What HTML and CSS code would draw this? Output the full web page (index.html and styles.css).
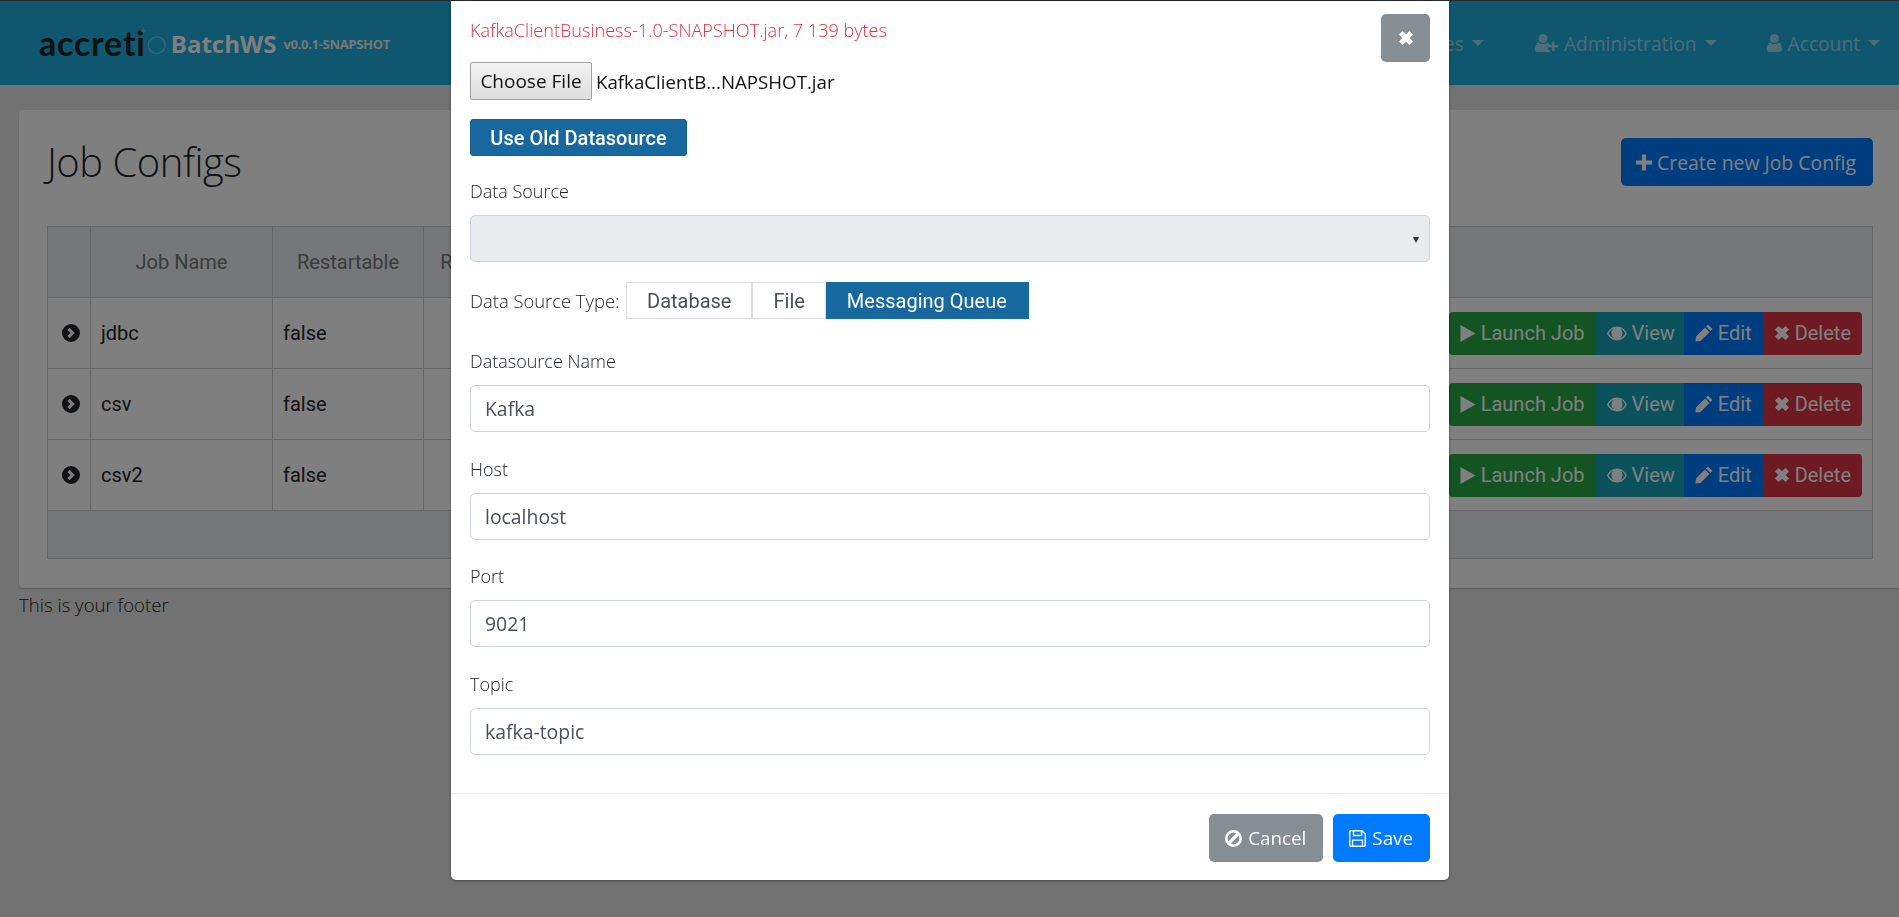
FILE: index.html
```html
<!DOCTYPE html>
<html lang="en">
<head>
    <meta charset="UTF-8">
    <meta name="viewport" content="width=device-width, initial-scale=1.0">
    <title>BatchWS</title>
    <link rel="stylesheet" href="styles.css">
</head>
<body>
    <svg class="icon-defs" width="0" height="0">
        <symbol id="i-play" viewBox="0 0 16 18"><path d="M0 0L16 9L0 18z"/></symbol>
        <symbol id="i-eye" viewBox="0 0 20 14"><path fill-rule="evenodd" d="M10 0C5.500 0 2 2.800 0 7c2 4.200 5.500 7 10 7s8-2.800 10-7C18 2.800 14.500 0 10 0zM1.700 7C2.900 4.700 4.400 3 6.300 2.100A5.500 5.500 0 0 0 4.500 7a5.500 5.500 0 0 0 11 0c0-1.900-.7-3.600-1.800-4.900C15.600 3 17.100 4.700 18.300 7c-1.800 3.300-4.700 5.500-8.300 5.500S3.500 10.300 1.700 7z"/></symbol>
        <symbol id="i-pencil" viewBox="0 0 18 18"><path d="M13 0.500L17.500 5L15.500 7L11 2.500zM10 3.500L14.500 8L5.500 17L0.500 17.500L1 12.500z"/></symbol>
        <symbol id="i-times" viewBox="0 0 14 14"><path d="M4 .8L7 3.800L10 .8L13.200 4L10.200 7L13.200 10L10 13.200L7 10.200L4 13.200L.8 10L3.800 7L.8 4z"/></symbol>
        <symbol id="i-plus" viewBox="0 0 16 16"><path d="M6 0h4v6h6v4h-6v6H6v-6H0V6h6z"/></symbol>
        <symbol id="i-user" viewBox="0 0 15 18"><circle cx="7.500" cy="4.500" r="4.500"/><path d="M0 16c0-5 1.500-7.500 3.500-7.500C4.800 9.500 6 10 7.500 10s2.700-.5 4-1.500c2 0 3.500 2.500 3.500 7.500 0 1.300-1 2-2.200 2H2.200C1 18 0 17.300 0 16z"/></symbol>
        <symbol id="i-user-plus" viewBox="0 0 24 18"><circle cx="9" cy="4.500" r="4.500"/><path d="M1 16c0-5 1.700-7.500 3.800-7.500C6 9.500 7.400 10 9 10s3-.5 4.200-1.500c1 0 1.900.6 2.500 1.700V12h-2v4h2v2H3.200C2 18 1 17.300 1 16z"/><path d="M18 7.500h2.500V11H24v2.500h-3.500V17H18v-3.500h-3.500V11H18z"/></symbol>
        <symbol id="i-ban" viewBox="0 0 18 18"><path fill-rule="evenodd" d="M9 0a9 9 0 1 0 0 18A9 9 0 0 0 9 0zM3.700 11.900A6 6 0 0 1 11.900 3.700zM6.100 14.300L14.300 6.100A6 6 0 0 1 6.100 14.300z"/></symbol>
        <symbol id="i-save" viewBox="0 0 18 18"><path fill-rule="evenodd" d="M2 0h12l4 4v12a2 2 0 0 1-2 2H2a2 2 0 0 1-2-2V2a2 2 0 0 1 2-2zM2 1.500a.5.500 0 0 0-.5.500v14a.5.500 0 0 0 .5.500h1V10h12v6.500h1a.5.500 0 0 0 .5-.5V4.600L14 2v4.500H4v-5zM5.500 1.500v3.500h7V1.500zM4.500 11.500v5h9v-5z"/></symbol>
        <symbol id="i-chevron" viewBox="0 0 18 18"><path fill-rule="evenodd" d="M9 0a9 9 0 1 0 0 18A9 9 0 0 0 9 0zM7.500 3.800L12.700 9L7.500 14.200L5.400 12.100L8.500 9L5.400 5.900z"/></symbol>
    </svg>

    <header class="navbar">
        <a class="brand" href="#">
            <span class="logo-word">accreti</span>
            <svg class="logo-ring" viewBox="0 0 24 30">
                <circle cx="11" cy="19" r="10.500"/>
                <path class="logo-star" d="M-6 -3.500L-4.800 -.5L-2 .7L-4.800 1.900L-6 5L-7.200 1.900L-10 .7L-7.200 -.5z"/>
            </svg>
            <span class="brand-name">BatchWS</span>
            <span class="brand-version">v0.0.1-SNAPSHOT</span>
        </a>
        <nav class="nav-links">
            <a class="nav-link" href="#">Job Instances<span class="caret"></span></a>
            <a class="nav-link" href="#"><svg class="nav-icon wide"><use href="#i-user-plus"/></svg>Administration<span class="caret"></span></a>
            <a class="nav-link" href="#"><svg class="nav-icon"><use href="#i-user"/></svg>Account<span class="caret"></span></a>
        </nav>
    </header>

    <main class="content">
        <section class="card">
            <div class="card-head">
                <h1>Job Configs</h1>
                <button class="btn btn-blue create-btn"><svg class="icon"><use href="#i-plus"/></svg>Create new Job Config</button>
            </div>
            <table class="job-table">
                <thead>
                    <tr>
                        <th class="col-toggle"></th>
                        <th class="col-name">Job Name</th>
                        <th class="col-restart">Restartable</th>
                        <th class="col-runs">Run Count</th>
                        <th></th>
                    </tr>
                </thead>
                <tbody>
                    <tr>
                        <td class="cell-toggle"><svg class="chevron"><use href="#i-chevron"/></svg></td>
                        <td>jdbc</td>
                        <td>false</td>
                        <td></td>
                        <td>
                            <div class="actions">
                                <a class="act act-green" href="#"><svg class="icon"><use href="#i-play"/></svg>Launch Job</a>
                                <a class="act act-teal" href="#"><svg class="icon eye"><use href="#i-eye"/></svg>View</a>
                                <a class="act act-blue" href="#"><svg class="icon pencil"><use href="#i-pencil"/></svg>Edit</a>
                                <a class="act act-red" href="#"><svg class="icon cross"><use href="#i-times"/></svg>Delete</a>
                            </div>
                        </td>
                    </tr>
                    <tr>
                        <td class="cell-toggle"><svg class="chevron"><use href="#i-chevron"/></svg></td>
                        <td>csv</td>
                        <td>false</td>
                        <td></td>
                        <td>
                            <div class="actions">
                                <a class="act act-green" href="#"><svg class="icon"><use href="#i-play"/></svg>Launch Job</a>
                                <a class="act act-teal" href="#"><svg class="icon eye"><use href="#i-eye"/></svg>View</a>
                                <a class="act act-blue" href="#"><svg class="icon pencil"><use href="#i-pencil"/></svg>Edit</a>
                                <a class="act act-red" href="#"><svg class="icon cross"><use href="#i-times"/></svg>Delete</a>
                            </div>
                        </td>
                    </tr>
                    <tr>
                        <td class="cell-toggle"><svg class="chevron"><use href="#i-chevron"/></svg></td>
                        <td>csv2</td>
                        <td>false</td>
                        <td></td>
                        <td>
                            <div class="actions">
                                <a class="act act-green" href="#"><svg class="icon"><use href="#i-play"/></svg>Launch Job</a>
                                <a class="act act-teal" href="#"><svg class="icon eye"><use href="#i-eye"/></svg>View</a>
                                <a class="act act-blue" href="#"><svg class="icon pencil"><use href="#i-pencil"/></svg>Edit</a>
                                <a class="act act-red" href="#"><svg class="icon cross"><use href="#i-times"/></svg>Delete</a>
                            </div>
                        </td>
                    </tr>
                </tbody>
                <tfoot>
                    <tr><td class="table-foot" colspan="5"></td></tr>
                </tfoot>
            </table>
        </section>
        <footer class="page-footer">This is your footer</footer>
    </main>

    <div class="backdrop"></div>

    <div class="modal">
        <div class="modal-body">
            <button class="btn btn-grey close-btn"><svg class="close-icon"><use href="#i-times"/></svg></button>
            <div class="file-info">KafkaClientBusiness-1.0-SNAPSHOT.jar, 7 139 bytes</div>
            <div class="file-row">
                <button class="file-btn">Choose File</button>
                <span class="file-name">KafkaClientB...NAPSHOT.jar</span>
            </div>
            <button class="old-btn">Use Old Datasource</button>

            <label class="field-label">Data Source</label>
            <div class="fake-select"><span class="select-caret"></span></div>

            <div class="type-row">
                <span class="type-label">Data Source Type:</span>
                <button class="type-btn">Database</button>
                <button class="type-btn">File</button>
                <button class="type-btn active">Messaging Queue</button>
            </div>

            <label class="field-label">Datasource Name</label>
            <input class="field" type="text" value="Kafka">
            <label class="field-label">Host</label>
            <input class="field" type="text" value="localhost">
            <label class="field-label">Port</label>
            <input class="field" type="text" value="9021">
            <label class="field-label">Topic</label>
            <input class="field" type="text" value="kafka-topic">
        </div>
        <div class="modal-footer">
            <button class="btn btn-grey"><svg class="icon"><use href="#i-ban"/></svg>Cancel</button>
            <button class="btn btn-primary"><svg class="icon"><use href="#i-save"/></svg>Save</button>
        </div>
    </div>
</body>
</html>
```

FILE: styles.css
```css
* {
    box-sizing: border-box;
}
html, body {
    height: 100%;
}
body {
    margin: 0;
    border-top: 1px solid #26292b;
    background-color: #e2e4e2;
    color: #212529;
    font-family: "Open Sans", sans-serif;
    font-size: 18px;
    overflow: hidden;
}
a {
    text-decoration: none;
    color: inherit;
}
button {
    font-family: inherit;
    cursor: pointer;
}
.icon-defs {
    position: absolute;
}

/* top bar */
.navbar {
    display: flex;
    align-items: center;
    justify-content: space-between;
    height: 84px;
    padding: 0 19px 0 39px;
    background-color: #1fadde;
}
.brand {
    display: flex;
    align-items: center;
}
.logo-word {
    font-family: "Lato", sans-serif;
    font-weight: 700;
    font-size: 34px;
    line-height: 1;
    letter-spacing: .8px;
    color: #1e2426;
}
.logo-ring {
    width: 19px;
    height: 24px;
    margin: -2px 0 0 2px;
    fill: none;
    stroke: #5fd0f0;
    stroke-width: 1.5;
    overflow: visible;
}
.logo-star {
    fill: #5fd0f0;
    stroke: none;
}
.brand-name {
    margin-left: 4px;
    font-weight: 700;
    font-size: 24px;
    color: #fff;
}
.brand-version {
    margin: 2px 0 0 7px;
    font-weight: 700;
    font-size: 13px;
    letter-spacing: -.3px;
    color: #eee;
}
.nav-links {
    display: flex;
    gap: 50px;
}
.nav-link {
    display: flex;
    align-items: center;
    color: rgba(255, 255, 255, .55);
    font-size: 19.200px;
}
.nav-icon {
    width: 15px;
    height: 18px;
    margin-right: 6px;
    fill: currentColor;
}
.nav-icon.wide {
    width: 24px;
}
.caret {
    margin-left: 8px;
    border-top: 6px solid currentColor;
    border-left: 6px solid transparent;
    border-right: 6px solid transparent;
}

/* page */
.content {
    padding: 25px 0 0 19px;
}
.card {
    height: 478px;
    padding: 0 26px 0 28px;
    background-color: #fff;
    border-radius: 4px 0 0 4px;
    box-shadow: 0 1px 1px rgba(0, 0, 0, .2);
}
.card-head {
    display: flex;
    justify-content: space-between;
    height: 116px;
    padding-top: 28px;
}
h1 {
    margin: 0;
    font-weight: 300;
    font-size: 40px;
    line-height: 48px;
    letter-spacing: -.5px;
}
.job-table {
    width: 100%;
    table-layout: fixed;
    border-collapse: collapse;
    font-family: "Roboto", sans-serif;
    font-size: 20px;
}
.job-table th, .job-table td {
    border: 1px solid #ccc;
    padding: 0 10px;
    height: 71px;
    text-align: left;
    font-weight: 400;
}
.job-table th {
    background-color: #ebeff3;
    color: #777;
    text-align: center;
}
.col-toggle {
    width: 43px;
}
.col-name {
    width: 182px;
}
.col-restart {
    width: 151px;
}
.col-runs {
    width: 126px;
}
.job-table .cell-toggle {
    padding: 0 10px 0 14px;
}
.chevron {
    display: block;
    width: 18px;
    height: 18px;
    margin: 0 auto;
    fill: currentColor;
}
.job-table .table-foot {
    height: 48px;
    background-color: #ebeff3;
}
.actions {
    display: flex;
    justify-content: flex-end;
}
.act {
    display: flex;
    align-items: center;
    height: 43px;
    padding: 0 11px;
    color: #fff;
}
.act-green {
    background-color: #28a745;
    border-radius: 4px 0 0 4px;
}
.act-teal {
    padding-right: 9px;
    background-color: #17a2b8;
}
.act-blue {
    background-color: #007bff;
}
.act-red {
    background-color: #dc3545;
    border-radius: 0 4px 4px 0;
}
.icon {
    width: 16px;
    height: 17px;
    margin-right: 5px;
    fill: currentColor;
}
.icon.eye {
    width: 20px;
}
.icon.pencil {
    width: 18px;
    height: 18px;
}
.icon.cross {
    width: 16px;
    height: 16px;
}
.page-footer {
    margin-top: 4px;
    font-weight: 300;
    font-size: 18.600px;
}

/* buttons */
.btn {
    display: inline-flex;
    align-items: center;
    height: 48px;
    padding: 0 17px 0 16px;
    border: none;
    border-radius: 5px;
    color: #fff;
    font-size: 18.800px;
}
.create-btn {
    padding: 0 17px 0 15px;
    font-size: 19.400px;
}
.btn-blue, .btn-primary {
    background-color: #007bff;
}
.btn-grey {
    background-color: #868e96;
}

/* modal */
.backdrop {
    position: fixed;
    inset: 1px 0 0 0;
    background-color: rgba(0, 0, 0, .5);
}
.modal {
    position: fixed;
    top: 1px;
    left: 451px;
    width: 998px;
    height: 879px;
    display: flex;
    flex-direction: column;
    background-color: #fff;
    border-radius: 0 0 5px 5px;
    box-shadow: 0 1px 3px rgba(0, 0, 0, .4);
}
.modal-body {
    position: relative;
    flex: 1;
    padding: 16px 19px 0;
}
.close-btn {
    position: absolute;
    top: 13px;
    right: 19px;
    justify-content: center;
    width: 49px;
    padding: 0;
}
.close-icon {
    width: 16px;
    height: 16px;
    fill: currentColor;
}
.file-info {
    font-weight: 300;
    font-size: 18.100px;
    line-height: 27px;
    color: #dc3545;
}
.file-row {
    display: flex;
    align-items: center;
    margin-top: 18px;
}
.file-btn {
    width: 122px;
    height: 38px;
    padding: 0;
    border: 1px solid #a0a0a0;
    border-radius: 2px;
    background: linear-gradient(#f3f3f3, #dedede);
    color: #111;
    font-size: 19px;
}
.file-name {
    margin-left: 4px;
    color: #111;
    font-size: 18.700px;
}
.old-btn {
    display: block;
    width: 217px;
    height: 37px;
    margin: 19px 0 22px;
    padding: 0;
    border: 1px solid #14608f;
    border-radius: 3px;
    background-color: #17689f;
    color: #fff;
    font-family: "Roboto", sans-serif;
    font-weight: 500;
    font-size: 20px;
}
.field-label {
    display: block;
    margin-bottom: 10px;
    font-weight: 300;
    font-size: 18px;
    line-height: 27px;
}
.fake-select {
    position: relative;
    height: 47px;
    border: 1px solid #ced4da;
    border-radius: 5px;
    background-color: #e9ecef;
}
.select-caret {
    position: absolute;
    right: 10px;
    top: 21px;
    border-top: 6px solid #333;
    border-left: 3.500px solid transparent;
    border-right: 3.500px solid transparent;
}
.type-row {
    display: flex;
    align-items: center;
    height: 37px;
    margin: 20px 0 29px;
}
.type-label {
    width: 156px;
    font-weight: 300;
    font-size: 18.400px;
}
.type-btn {
    height: 37px;
    padding: 0 20px;
    border: 1px solid #ddd;
    background-color: #fff;
    color: #495057;
    font-family: "Roboto", sans-serif;
    font-size: 20px;
}
.type-btn.active {
    padding: 0 21px 0 20px;
    border-color: #17689f;
    background-color: #17689f;
    color: #fff;
}
.field {
    display: block;
    width: 100%;
    height: 47px;
    margin-bottom: 23.500px;
    padding: 0 14px;
    border: 1px solid #ced4da;
    border-radius: 5px;
    color: #495057;
    font-family: inherit;
    font-size: 19.400px;
}
.modal-footer {
    display: flex;
    justify-content: flex-end;
    gap: 10px;
    height: 87px;
    padding: 20px 19px;
    border-top: 1px solid #e9ecef;
}
.modal-footer .icon {
    width: 17px;
    margin-right: 6px;
}
```
